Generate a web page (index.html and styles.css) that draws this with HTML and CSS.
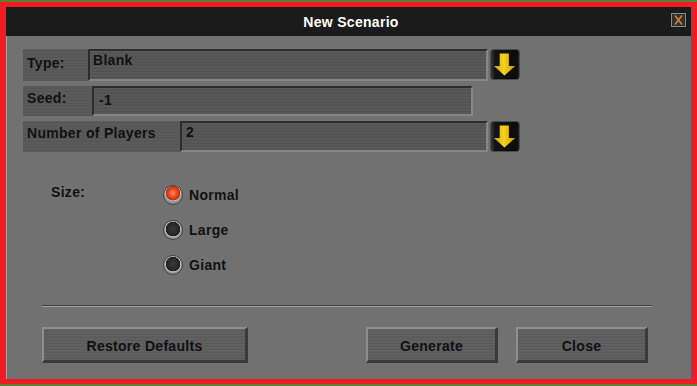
FILE: index.html
```html
<!doctype html>
<html lang="en">
  <head>
    <meta charset="UTF-8" />
    <title>New Scenario</title>
    <link rel="stylesheet" href="styles.css">
  </head>
  <body>
    <div class="dialog">
      <div class="titlebar">
        <span class="title">New Scenario</span>
        <button class="close-x" aria-label="Close">
          <svg width="13" height="12" viewBox="0 0 13 12">
            <path d="M3 1.5 L10 10.5 M10 1.5 L3 10.5" stroke="#d9822b" stroke-width="1.6" fill="none" />
          </svg>
        </button>
      </div>
      <div class="panel">
        <div class="field-row row-type">
          <div class="field-label label-type">Type:</div>
          <div class="field-input input-type">Blank</div>
          <button class="drop-btn" aria-label="Open">
            <svg width="30" height="31" viewBox="0 0 30 31">
              <defs>
                <linearGradient id="arrow1" x1="0" y1="0" x2="1" y2="0">
                  <stop offset="0" stop-color="#c79a06" />
                  <stop offset="0.45" stop-color="#f7d41c" />
                  <stop offset="1" stop-color="#c99c08" />
                </linearGradient>
              </defs>
              <path d="M10 4 H19.5 V17 H26 L15 27 L4 17 H10 Z" fill="url(#arrow1)" />
            </svg>
          </button>
        </div>
        <div class="field-row row-seed">
          <div class="field-label label-seed">Seed:</div>
          <div class="field-input input-seed">-1</div>
        </div>
        <div class="field-row row-players">
          <div class="field-label label-players">Number of Players</div>
          <div class="field-input input-players">2</div>
          <button class="drop-btn" aria-label="Open">
            <svg width="30" height="31" viewBox="0 0 30 31">
              <defs>
                <linearGradient id="arrow2" x1="0" y1="0" x2="1" y2="0">
                  <stop offset="0" stop-color="#c79a06" />
                  <stop offset="0.45" stop-color="#f7d41c" />
                  <stop offset="1" stop-color="#c99c08" />
                </linearGradient>
              </defs>
              <path d="M10 4 H19.5 V17 H26 L15 27 L4 17 H10 Z" fill="url(#arrow2)" />
            </svg>
          </button>
        </div>

        <div class="size-group">
          <div class="size-label">Size:</div>
          <div class="radio-list">
            <div class="radio-item"><span class="radio checked"></span>Normal</div>
            <div class="radio-item"><span class="radio"></span>Large</div>
            <div class="radio-item"><span class="radio"></span>Giant</div>
          </div>
        </div>

        <div class="separator"></div>

        <div class="button-row">
          <button class="game-button restore-button">Restore Defaults</button>
          <div class="button-group">
            <button class="game-button">Generate</button>
            <button class="game-button">Close</button>
          </div>
        </div>
      </div>
    </div>
  </body>
</html>
```

FILE: styles.css
```css
body {
  margin: 0;
  background-color: #5f7d33;
  font-family: "Liberation Sans", Arial, sans-serif;
  font-weight: bold;
  font-size: 14px;
  line-height: 16px;
  letter-spacing: 0.3px;
  color: #111;
}

.dialog {
  margin-top: 2px;
  width: 697px;
  height: 382px;
  box-sizing: border-box;
  border: solid #ee1c24;
  border-width: 5px 6px 5px 6px;
  display: flex;
  flex-direction: column;
}

.titlebar {
  position: relative;
  height: 29px;
  background-color: #1b1b1b;
  display: flex;
  align-items: center;
  justify-content: center;
}

.title {
  color: #fff;
  margin-left: 5px;
  margin-top: 1px;
}

.close-x {
  position: absolute;
  right: 5px;
  top: 6px;
  width: 15px;
  height: 14px;
  padding: 0;
  border: 1px solid #8a8a8a;
  background-color: #303030;
  display: flex;
  align-items: center;
  justify-content: center;
}

.panel {
  flex: 1;
  background-color: #717171;
  border-left: 1px solid #a4a4a4;
  padding: 13px 0 0 16px;
}

.field-row {
  display: flex;
  align-items: stretch;
  height: 32px;
  margin-bottom: 5px;
}

.row-seed {
  height: 30px;
  margin-bottom: 5px;
}

.row-players {
  height: 31px;
  margin-bottom: 0;
}

.field-label {
  box-sizing: border-box;
  padding: 6px 0 0 4px;
  background-color: #585858;
  background-image: repeating-linear-gradient(
    180deg,
    rgba(255, 255, 255, 0.025) 0px,
    rgba(255, 255, 255, 0.025) 1px,
    rgba(0, 0, 0, 0.03) 2px,
    rgba(0, 0, 0, 0.03) 3px
  );
}

.label-type {
  width: 65px;
}

.label-seed {
  width: 69px;
  padding-top: 4px;
}

.label-players {
  width: 157px;
  padding-top: 4px;
}

.field-input {
  box-sizing: border-box;
  padding: 1px 0 0 3px;
  background-color: #555;
  background-image: repeating-linear-gradient(
    180deg,
    rgba(255, 255, 255, 0.03) 0px,
    rgba(255, 255, 255, 0.03) 1px,
    rgba(0, 0, 0, 0.04) 2px,
    rgba(0, 0, 0, 0.04) 3px
  );
  border-top: 2px solid #2c2c2c;
  border-left: 2px solid #2c2c2c;
  border-bottom: 2px solid #868686;
  border-right: 2px solid #868686;
}

.input-type {
  width: 400px;
}

.input-seed {
  width: 381px;
  padding-top: 4px;
  padding-left: 5px;
}

.input-players {
  width: 308px;
  padding-left: 4px;
}

.drop-btn {
  width: 30px;
  height: 31px;
  margin-left: 2px;
  padding: 0;
  border: 1px solid #4a4a4a;
  border-radius: 3px;
  background-image: linear-gradient(
    90deg,
    #3a3a3a 0px,
    #121212 4px,
    #0c0c0c 26px,
    #3a3a3a 30px
  );
  display: flex;
}

.drop-btn svg {
  margin: -1px 0 0 -1px;
}

.size-group {
  display: flex;
  margin-top: 25px;
}

.size-label {
  box-sizing: border-box;
  width: 140px;
  padding: 7px 0 0 28px;
}

.radio-item {
  height: 35px;
  display: flex;
  align-items: center;
}

.radio {
  box-sizing: border-box;
  width: 20px;
  height: 20px;
  margin-right: 6px;
  border-radius: 50%;
  border: 1px solid #444;
  background: radial-gradient(circle at 50% 45%, #3a3a3a 0px, #262626 6px, #1e1e1e 7px, #bdbdbd 7.5px, #8e8e8e 9px);
}

.radio.checked {
  background: radial-gradient(circle at 50% 40%, #ff8a62 0px, #ec4a22 4px, #b8301a 7px, #bdbdbd 7.5px, #8e8e8e 9px);
}

.separator {
  margin: 23px 0 0 19px;
  width: 610px;
  height: 1px;
  background-color: #3f3f3f;
  border-bottom: 1px solid #a2a2a2;
}

.button-row {
  display: flex;
  justify-content: space-between;
  width: 606px;
  margin: 20px 0 0 19px;
}

.button-group {
  display: flex;
  gap: 18px;
}

.game-button {
  box-sizing: border-box;
  width: 132px;
  height: 36px;
  padding: 3px 0 0;
  font: inherit;
  letter-spacing: inherit;
  color: #111;
  background-color: #5d5d5d;
  background-image: repeating-linear-gradient(
    180deg,
    rgba(255, 255, 255, 0.03) 0px,
    rgba(255, 255, 255, 0.03) 1px,
    rgba(0, 0, 0, 0.04) 2px,
    rgba(0, 0, 0, 0.04) 3px
  );
  border-style: solid;
  border-width: 2px 3px 3px 2px;
  border-color: #8e8e8e #3a3a3a #3a3a3a #8e8e8e;
}

.restore-button {
  width: 206px;
}
```
